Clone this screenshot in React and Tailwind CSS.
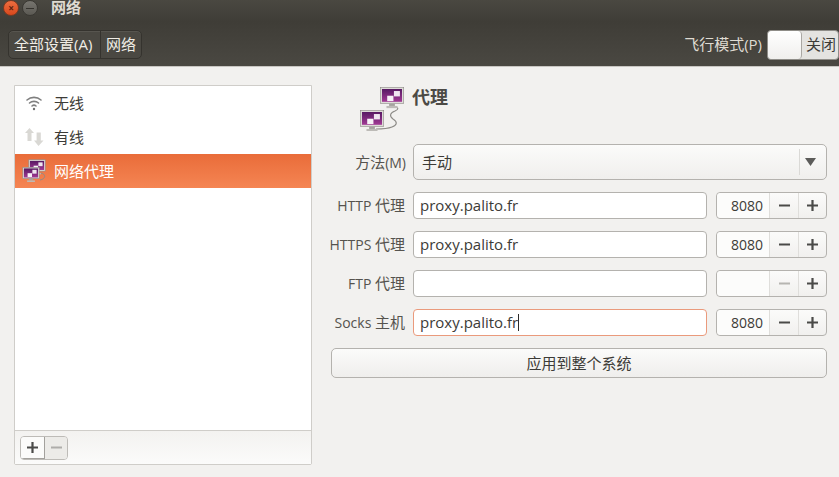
import React from 'react';

const font = "font-['Open_Sans','Noto_Sans_CJK_SC',sans-serif]";

const Monitor = ({ x, y, w = 24, id }) => {
  const h = w * 0.7;
  const f = w / 12;
  return (
    <g>
      <defs>
        <linearGradient id={id} x1="0" y1="0" x2="0" y2="1">
          <stop offset="0" stopColor="#571a63" />
          <stop offset="1" stopColor="#a23a95" />
        </linearGradient>
      </defs>
      <rect x={x + 0.3} y={y + 0.3} width={w - 0.6} height={h - 0.6} fill="#dedcd8" stroke="#8c8a86" strokeWidth="0.6" />
      <rect x={x + f} y={y + f} width={w - 2 * f} height={h - 2 * f} fill={`url(#${id})`} />
      <rect x={x + w * 0.58} y={y + h * 0.24} width={w * 0.25} height={h * 0.32} fill="#efe6f0" />
      <rect x={x + w * 0.3} y={y + h * 0.52} width={w * 0.26} height={h * 0.32} fill="#f7f2f7" />
      <rect x={x + w * 0.38} y={y + h} width={w * 0.24} height={w * 0.09} fill="#a5a39f" />
      <rect x={x + w * 0.27} y={y + h + w * 0.09} width={w * 0.46} height={w * 0.09} fill="#bdbbb7" />
    </g>
  );
};

const ProxyBig = () => (
  <svg width="46" height="46" viewBox="0 0 46 46" className="shrink-0">
    <path d="M34 22 C 40 22 40 24 36 26 C 31 28 30 31 34 34 C 39 37 38 40 33 42 C 28 44 24 44 17 44" fill="none" stroke="#8d8b87" strokeWidth="1.1" />
    <Monitor x={21} y={2} w={24} id="mon-a" />
    <Monitor x={1} y={25} w={24} id="mon-b" />
  </svg>
);

const ProxySmall = () => (
  <svg width="24" height="24" viewBox="0 0 24 24" className="shrink-0">
    <path d="M19 14 C 24 15 24 20 18 21" fill="none" stroke="#8d8b87" strokeWidth="1" />
    <Monitor x={6.5} y={0.5} w={17} id="mon-c" />
    <Monitor x={0.5} y={8} w={17} id="mon-d" />
  </svg>
);

const Wifi = () => (
  <svg width="18" height="16" viewBox="0 0 18 16" fill="none" stroke="#7f7f7f" strokeWidth="1.6" strokeLinecap="round">
    <path d="M2 5 C 6 1.5 12 1.5 16 5" />
    <path d="M4.5 8 C 7 5.8 11 5.8 13.5 8" />
    <path d="M7 11 C 8.2 10 9.8 10 11 11" />
    <circle cx="9" cy="14" r="1.2" fill="#6f6f6f" stroke="none" />
  </svg>
);

const Wired = () => (
  <svg width="20" height="20" viewBox="0 0 20 20" fill="#d9d8d4">
    <path d="M5.5 1 L10 6 H7.5 V14 H3.5 V6 H1 Z" />
    <path d="M14.5 19 L19.5 13.5 H16.8 V5.5 H12.6 V13.5 H10 Z" />
  </svg>
);

const PlusIcon = ({ color = '#4a4a48' }) => (
  <svg width="11" height="11" viewBox="0 0 11 11" className="block">
    <path d="M0 5.5H11M5.5 0V11" stroke={color} strokeWidth="2.2" />
  </svg>
);

const MinusIcon = ({ color = '#4a4a48' }) => (
  <svg width="11" height="3" viewBox="0 0 11 3" className="block">
    <path d="M0 1.5H11" stroke={color} strokeWidth="2" />
  </svg>
);

const ToolbarCrumbs = () => (
  <div className="flex h-[29px] ml-[8px] rounded-[5px] border border-[#35332e] bg-[#4a4842] shadow-[inset_0_1px_0_#57554f] text-[#f0ede6] text-[15px] leading-none">
    <div className="flex items-center px-[5px] border-r border-[#35332e] w-[92px] whitespace-nowrap">全部设置(A)</div>
    <div className="flex items-center justify-center w-[40px] whitespace-nowrap">网络</div>
  </div>
);

const SideRow = ({ icon, label, active }) => (
  <div
    className={`flex items-center h-[34px] ${
      active ? 'bg-gradient-to-b from-[#e96c39] to-[#f58553] text-white' : 'text-[#3c3b37]'
    }`}
  >
    <div className="flex justify-center items-center w-[36px] pl-[1px]">{icon}</div>
    <span className="ml-[3px] text-[15px]">{label}</span>
  </div>
);

const TextBox = ({ value, focused }) => (
  <div
    className={`flex items-center w-[294px] h-[27px] rounded-[4px] bg-white pl-[6px] text-[15px] text-[#3c3b37] border ${
      focused ? 'border-[#ea9a7c]' : 'border-[#b4b2ae]'
    }`}
  >
    {value}
    {focused && <span className="w-px h-[17px] bg-[#2b2b2b]" />}
  </div>
);

const Spin = ({ value, disabled }) => (
  <div className="flex w-[111px] h-[27px] rounded-[4px] border border-[#b4b2ae] bg-gradient-to-b from-[#fbfbfa] to-[#f1f0ee] text-[#3c3b37]">
    <div className="flex-1 flex items-center justify-end pr-[6px] text-[14px] bg-[#fcfcfb] rounded-l-[4px]">{value}</div>
    <div className="flex items-center justify-center w-[29px] border-l border-[#dfdedb]">
      <MinusIcon color={disabled ? '#b6b5b1' : '#4a4a48'} />
    </div>
    <div className="flex items-center justify-center w-[28px] border-l border-[#dfdedb]">
      <PlusIcon />
    </div>
  </div>
);

const ProxyRow = ({ name, suffix, value, port, focused, disabled }) => (
  <div className="flex items-center h-[27px]">
    <div className="w-[81px] shrink-0 text-right text-[14px] text-[#55534e] whitespace-nowrap">
      {name} <span className="text-[15px]">{suffix}</span>
    </div>
    <div className="ml-[8px]">
      <TextBox value={value} focused={focused} />
    </div>
    <div className="ml-[9px]">
      <Spin value={port} disabled={disabled} />
    </div>
  </div>
);

export default function App() {
  return (
    <div className={`w-[839px] h-[477px] overflow-hidden flex flex-col bg-[#f2f1ef] ${font}`}>
      {/* title bar */}
      <div className="flex items-start h-[22px] shrink-0 bg-gradient-to-b from-[#4a4841] to-[#3f3d37]">
        <div className="flex items-center justify-center w-[16px] h-[16px] ml-[3px] rounded-full bg-gradient-to-b from-[#ee6d3f] to-[#d8481c] border border-[#7a3a22] text-[#5a2310] text-[10px] font-bold leading-none">
          ×
        </div>
        <div className="flex items-center justify-center w-[16px] h-[16px] ml-[3px] rounded-full bg-gradient-to-b from-[#77756f] to-[#5b5953] border border-[#3a3833]">
          <span className="block w-[8px] h-px bg-[#35332e]" />
        </div>
        <span className="ml-[13px] text-[15px] font-bold text-[#dfdbd2] leading-[15px]">网络</span>
      </div>

      {/* toolbar */}
      <div className="flex items-center h-[45px] shrink-0 bg-gradient-to-b from-[#3f3d37] to-[#4a4842] border-b border-[#c8c6c2] pt-[1px]">
        <ToolbarCrumbs />
        <div className="ml-auto flex items-center">
          <span className="text-[15px] text-[#dfdbd2] mr-[5px]">飞行模式(P)</span>
          <div className="flex w-[72px] h-[30px] rounded-[4px] border border-[#8f8d88] bg-[#e4e3e0] overflow-hidden">
            <div className="w-[34px] h-full bg-gradient-to-b from-white to-[#f0efed] border-r border-[#a9a7a3] rounded-[4px]" />
            <div className="flex-1 flex items-center pl-[4px] text-[15px] text-[#3c3b37] whitespace-nowrap">关闭</div>
          </div>
        </div>
      </div>

      {/* content */}
      <div className="flex flex-1 min-h-0 pt-[18px] pl-[14px]">
        <div className="flex flex-col w-[298px] h-[380px] border border-[#cfcdc9] rounded-b-[2px]">
          <div className="flex-1 bg-white border-b border-[#cfcdc9]">
            <SideRow icon={<Wifi />} label="无线" />
            <SideRow icon={<Wired />} label="有线" />
            <SideRow icon={<ProxySmall />} label="网络代理" active />
          </div>
          <div className="flex items-center h-[33px] pl-[5px] bg-gradient-to-b from-[#f3f2f0] to-[#fbfbfa]">
            <div className="flex h-[24px] w-[48px] rounded-[4px] border border-[#bdbbb7] overflow-hidden">
              <div className="flex items-center justify-center w-[24px] bg-[#fbfbfa] border-r border-b border-[#a3a19d]">
                <PlusIcon />
              </div>
              <div className="flex items-center justify-center flex-1 bg-[#ecebe8]">
                <MinusIcon color="#aeadaa" />
              </div>
            </div>
          </div>
        </div>

        <div className="flex flex-col w-[496px] ml-[19px]">
          <div className="flex items-start h-[59px] pl-[28px]">
            <ProxyBig />
            <span className="ml-[7px] mt-[2px] text-[18px] font-bold text-[#4c4a45] leading-[20px]">代理</span>
          </div>

          <div className="flex items-center h-[36px]">
            <div className="w-[75px] shrink-0 text-right text-[14px] text-[#55534e] whitespace-nowrap">
              <span className="text-[15px]">方法</span>(M)
            </div>
            <div className="ml-[7px] flex flex-1 h-[36px] rounded-[5px] border border-[#b4b2ae] bg-gradient-to-b from-[#fbfbfa] to-[#f0efed] text-[15px] text-[#3c3b37]">
              <div className="flex-1 flex items-center pl-[8px]">手动</div>
              <div className="w-px my-[4px] bg-[#dad9d6]" />
              <div className="flex items-center justify-center w-[26px] pr-[6px]">
                <svg width="11" height="8" viewBox="0 0 11 8"><path d="M0 0 H11 L5.5 8 Z" fill="#5c5c5a" /></svg>
              </div>
            </div>
          </div>

          <div className="flex flex-col gap-[12px] mt-[12px] -ml-[7px]">
            <ProxyRow name="HTTP" suffix="代理" value="proxy.palito.fr" port="8080" />
            <ProxyRow name="HTTPS" suffix="代理" value="proxy.palito.fr" port="8080" />
            <ProxyRow name="FTP" suffix="代理" value="" port="" disabled />
            <ProxyRow name="Socks" suffix="主机" value="proxy.palito.fr" port="8080" focused />
          </div>

          <button className="mt-[12px] h-[30px] w-[496px] rounded-[5px] border border-[#b4b2ae] bg-gradient-to-b from-[#fbfbfa] to-[#efeeec] text-[15px] text-[#3c3b37]">
            应用到整个系统
          </button>
        </div>
      </div>
    </div>
  );
}
